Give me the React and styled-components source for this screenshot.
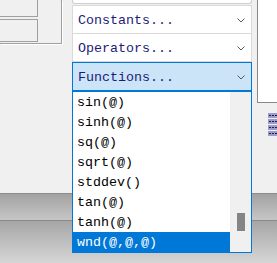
import React from "react";
import styled, { createGlobalStyle } from "styled-components";

const GlobalStyle = createGlobalStyle`
  html, body {
    margin: 0;
    padding: 0;
  }
  body {
    width: 277px;
    height: 263px;
    overflow: hidden;
    background: #f0f0f0;
    font-family: "Liberation Mono", "Courier New", monospace;
  }
`;

const Window = styled.div`
  width: 277px;
  height: 263px;
  display: grid;
  grid-template-rows: 193px 27px 1fr;
  overflow: hidden;
`;

const Workspace = styled.div`
  display: flex;
  align-items: flex-start;
  background: #f0f0f0;
`;

const LeftPanel = styled.div`
  box-sizing: border-box;
  width: 62px;
  height: 44px;
  border-right: 1px solid #a0a0a0;
  border-bottom: 1px solid #a0a0a0;
  box-shadow: 1px 1px 0 #ffffff;
  display: flex;
  flex-direction: column;
  gap: 2px;
`;

const FieldBox = styled.div`
  box-sizing: border-box;
  width: 38px;
  height: ${(p) => p.$h}px;
  border-right: 1px solid #a0a0a0;
  border-bottom: 1px solid #a0a0a0;
  border-top: ${(p) => (p.$top ? "1px solid #a0a0a0" : "none")};
`;

const Column = styled.div`
  width: 180px;
  margin-left: 10px;
  display: flex;
  flex-direction: column;
`;

const CutCombo = styled.div`
  box-sizing: border-box;
  height: 4px;
  margin-bottom: 1px;
  background: #ffffff;
  border: 1px solid #cfcfcf;
  border-top: none;
  border-radius: 0 0 3px 3px;
`;

const Combo = styled.div`
  box-sizing: border-box;
  height: 29px;
  margin-top: ${(p) => (p.$join ? "-1px" : "0")};
  display: flex;
  align-items: center;
  justify-content: space-between;
  padding: 1px 6px 0 5px;
  background: ${(p) => (p.$open ? "#cce4f7" : "#ffffff")};
  border: 1px solid ${(p) => (p.$open ? "#0078d7" : "#d9d9d9")};
  color: #1c1c78;
  font-size: 13.33px;
`;

const Label = styled.span`
  white-space: pre;
`;

const DropWrap = styled.div`
  position: relative;
`;

const ListBox = styled.div`
  position: absolute;
  top: 100%;
  left: 0;
  width: 180px;
  height: 162px;
  box-sizing: border-box;
  border: 1px solid #0078d7;
  background: #ffffff;
  display: flex;
  z-index: 2;
`;

const Items = styled.div`
  flex: 1;
  display: flex;
  flex-direction: column;
`;

const Item = styled.div`
  box-sizing: border-box;
  height: 20px;
  line-height: 19px;
  padding: 1px 0 0 4px;
  font-size: 13.33px;
  white-space: pre;
  color: ${(p) => (p.$selected ? "#ffffff" : "#000000")};
  background: ${(p) => (p.$selected ? "#0078d7" : "transparent")};
`;

const ScrollTrack = styled.div`
  width: 21px;
  background: #f0f0f0;
  display: flex;
  justify-content: center;
  padding-top: 121px;
`;

const Thumb = styled.div`
  width: 8px;
  height: 18px;
  background: #858585;
`;

const RightSide = styled.div`
  margin-left: 5px;
  flex: 1;
  display: flex;
  flex-direction: column;
`;

const RightPanel = styled.div`
  height: 103px;
  box-sizing: border-box;
  background: #ffffff;
  border-left: 1px solid #8a8a8a;
  border-bottom: 1px solid #8a8a8a;
`;

const TinyIcons = styled.div`
  margin: 10px 0 0 11px;
  display: flex;
  flex-direction: column;
  gap: 1px;
`;

const ToolBand = styled.div`
  border-top: 1px solid ${(p) => p.$line};
  background: linear-gradient(${(p) => p.$from}, ${(p) => p.$to});
`;

const Chevron = () => (
  <svg width="8" height="5" viewBox="0 0 8 5">
    <polyline points="0.5,0.5 4,4 7.5,0.5" fill="none" stroke="#5a5a5a" strokeWidth="1" />
  </svg>
);

const TinyIcon = () => (
  <svg width="9" height="5" viewBox="0 0 9 5">
    <rect x="0" y="0" width="9" height="5" fill="#9c9ccc" />
    <rect x="1" y="2" width="2" height="1" fill="#20204a" />
    <rect x="4" y="2" width="2" height="1" fill="#20204a" />
    <rect x="7" y="2" width="2" height="1" fill="#20204a" />
  </svg>
);

const functions = ["sin(@)", "sinh(@)", "sq(@)", "sqrt(@)", "stddev()", "tan(@)", "tanh(@)", "wnd(@,@,@)"];

export default function App() {
  return (
    <>
      <GlobalStyle />
      <Window>
        <Workspace>
          <LeftPanel>
            <FieldBox $h={17} />
            <FieldBox $h={23} $top />
          </LeftPanel>
          <Column>
            <CutCombo />
            <Combo>
              <Label>Constants...</Label>
              <Chevron />
            </Combo>
            <Combo $join>
              <Label>Operators...</Label>
              <Chevron />
            </Combo>
            <DropWrap>
              <Combo $open>
                <Label>Functions...</Label>
                <Chevron />
              </Combo>
              <ListBox>
                <Items>
                  {functions.map((f) => (
                    <Item key={f} $selected={f === "wnd(@,@,@)"}>
                      {f}
                    </Item>
                  ))}
                </Items>
                <ScrollTrack>
                  <Thumb />
                </ScrollTrack>
              </ListBox>
            </DropWrap>
          </Column>
          <RightSide>
            <RightPanel />
            <TinyIcons>
              <TinyIcon />
              <TinyIcon />
              <TinyIcon />
              <TinyIcon />
            </TinyIcons>
          </RightSide>
        </Workspace>
        <ToolBand $line="#8e8e8e" $from="#a2a2a2" $to="#c6c6c6" />
        <ToolBand $line="#8a8a8a" $from="#a6a6a6" $to="#d6d6d6" />
      </Window>
    </>
  );
}
